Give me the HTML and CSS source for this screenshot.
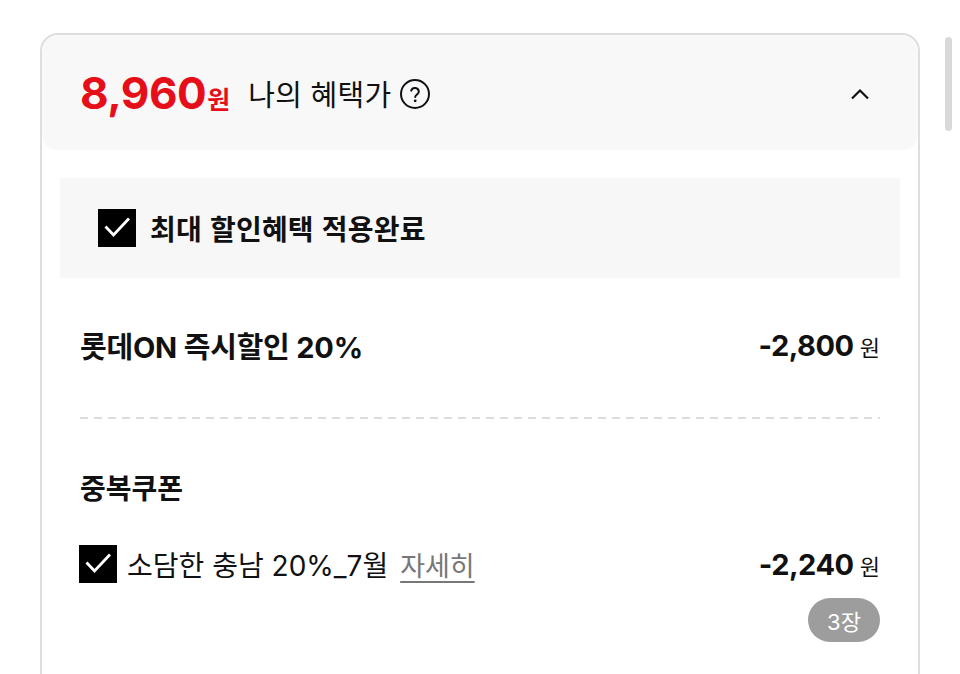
FILE: index.html
```html
<!DOCTYPE html>
<html lang="ko">
<head>
    <meta charset="UTF-8">
    <meta name="viewport" content="width=device-width, initial-scale=1.0">
    <title>나의 혜택가</title>
    <link rel="stylesheet" href="styles.css">
</head>
<body>
    <div class="benefit-card">
        <div class="benefit-header">
            <div class="price">
                <span class="price-num">8,960</span><span class="price-unit">원</span>
            </div>
            <span class="price-label">나의 혜택가</span>
            <svg class="help-icon" width="32" height="32" viewBox="0 0 32 32">
                <circle cx="16" cy="16" r="14" fill="none" stroke="#111" stroke-width="2"/>
                <path d="M12.2 12.6a3.9 3.9 0 0 1 7.6 1.1c0 2.6-3.6 3-3.6 5.4" fill="none" stroke="#111" stroke-width="2" stroke-linecap="round"/>
                <circle cx="16.2" cy="22.8" r="1.4" fill="#111"/>
            </svg>
            <svg class="toggle" width="20" height="12" viewBox="0 0 20 12">
                <path d="M2 10.5L10 2.5l8 8" fill="none" stroke="#111" stroke-width="2.2"/>
            </svg>
        </div>

        <div class="benefit-body">
            <div class="max-box">
                <span class="checkbox">
                    <svg width="38" height="38" viewBox="0 0 38 38"><path d="M7.5 17.5l8 8.5L31 9.5" fill="none" stroke="#fff" stroke-width="2.8"/></svg>
                </span>
                <span class="max-text">최대 할인혜택 적용완료</span>
            </div>

            <div class="row instant">
                <span class="row-title">롯데ON 즉시할인 20%</span>
                <span class="amount"><b>-2,800</b> 원</span>
            </div>

            <div class="dash"></div>

            <div class="coupon-title">중복쿠폰</div>
            <div class="row coupon">
                <div class="coupon-name">
                    <span class="checkbox">
                        <svg width="38" height="38" viewBox="0 0 38 38"><path d="M7.5 17.5l8 8.5L31 9.5" fill="none" stroke="#fff" stroke-width="2.8"/></svg>
                    </span>
                    <span>소담한 충남 20%_7월</span>
                    <a class="detail" href="#">자세히</a>
                </div>
                <span class="amount"><b>-2,240</b> 원</span>
            </div>
            <div class="count-row">
                <span class="count">3장</span>
            </div>
        </div>
    </div>

    <div class="scroll-thumb"></div>
</body>
</html>
```

FILE: styles.css
```css
* {
    margin: 0;
    padding: 0;
    box-sizing: border-box;
}

body {
    background: #fff;
    font-family: 'Inter', 'Noto Sans CJK KR', sans-serif;
    color: #111;
    padding: 33px 40px 0;
    overflow: hidden;
}

.benefit-card {
    border: 2px solid #dedede;
    border-radius: 18px;
    height: 700px;
    overflow: hidden;
}

.benefit-header {
    display: flex;
    align-items: center;
    height: 115px;
    padding: 0 48px 0 38px;
    background: #f8f8f8;
    border-radius: 16px;
}

.price {
    color: #e60f19;
    font-weight: 700;
    display: flex;
    align-items: baseline;
}

.price-num {
    font-size: 44px;
    letter-spacing: -0.5px;
}

.price-unit {
    font-size: 25px;
    margin-left: 1px;
}

.price-label {
    font-family: 'Noto Sans CJK KR', sans-serif;
    font-size: 29px;
    margin-left: 18px;
    letter-spacing: 0.3px;
}

.help-icon {
    margin-left: 7px;
    margin-top: 2px;
}

.toggle {
    margin-left: auto;
    margin-top: 2px;
}

.benefit-body {
    padding: 28px 18px 0;
}

.max-box {
    display: flex;
    align-items: center;
    height: 100px;
    padding-left: 38px;
    background: #f7f7f7;
}

.checkbox {
    display: inline-flex;
    width: 38px;
    height: 38px;
    background: #000;
    flex-shrink: 0;
}

.max-text {
    font-family: 'Noto Sans CJK KR', sans-serif;
    font-size: 28px;
    font-weight: 700;
    margin-left: 14px;
    letter-spacing: 0.2px;
}

.row {
    display: flex;
    align-items: center;
    justify-content: space-between;
    padding: 0 20px;
}

.instant {
    height: 36px;
    margin-top: 49px;
}

.row-title {
    font-size: 29px;
    font-weight: 700;
    letter-spacing: -0.2px;
}

.amount {
    font-family: 'Noto Sans CJK KR', sans-serif;
    font-size: 22px;
}

.amount b {
    font-family: 'Inter', sans-serif;
    font-size: 29px;
    font-weight: 700;
    letter-spacing: -0.5px;
}

.dash {
    height: 2px;
    margin: 54px 20px 0;
    background: linear-gradient(to right, #dcdcdc 8px, transparent 8px) 0 0 / 14px 2px repeat-x;
}

.coupon-title {
    font-family: 'Noto Sans CJK KR', sans-serif;
    font-size: 28px;
    font-weight: 700;
    line-height: 36px;
    margin-top: 50px;
    padding: 0 20px;
}

.coupon {
    height: 38px;
    margin-top: 40px;
    padding-left: 19px;
}

.coupon-name {
    display: flex;
    align-items: center;
    font-size: 28px;
}

.coupon-name .checkbox {
    margin-right: 10px;
}

.detail {
    color: #777;
    margin-left: 12px;
    font-size: 27px;
    text-decoration: underline;
    text-underline-offset: 5px;
    text-decoration-thickness: 1.5px;
}

.count-row {
    display: flex;
    justify-content: flex-end;
    padding: 0 20px;
    margin-top: 15px;
}

.count {
    display: inline-flex;
    align-items: center;
    justify-content: center;
    width: 72px;
    height: 44px;
    border-radius: 22px;
    background: #9d9d9d;
    color: #fff;
    font-size: 22px;
}

/* page scroll indicator */
.scroll-thumb {
    position: fixed;
    top: 37px;
    right: 8px;
    width: 7px;
    height: 94px;
    border-radius: 4px;
    background: #d9d9d9;
}
```
